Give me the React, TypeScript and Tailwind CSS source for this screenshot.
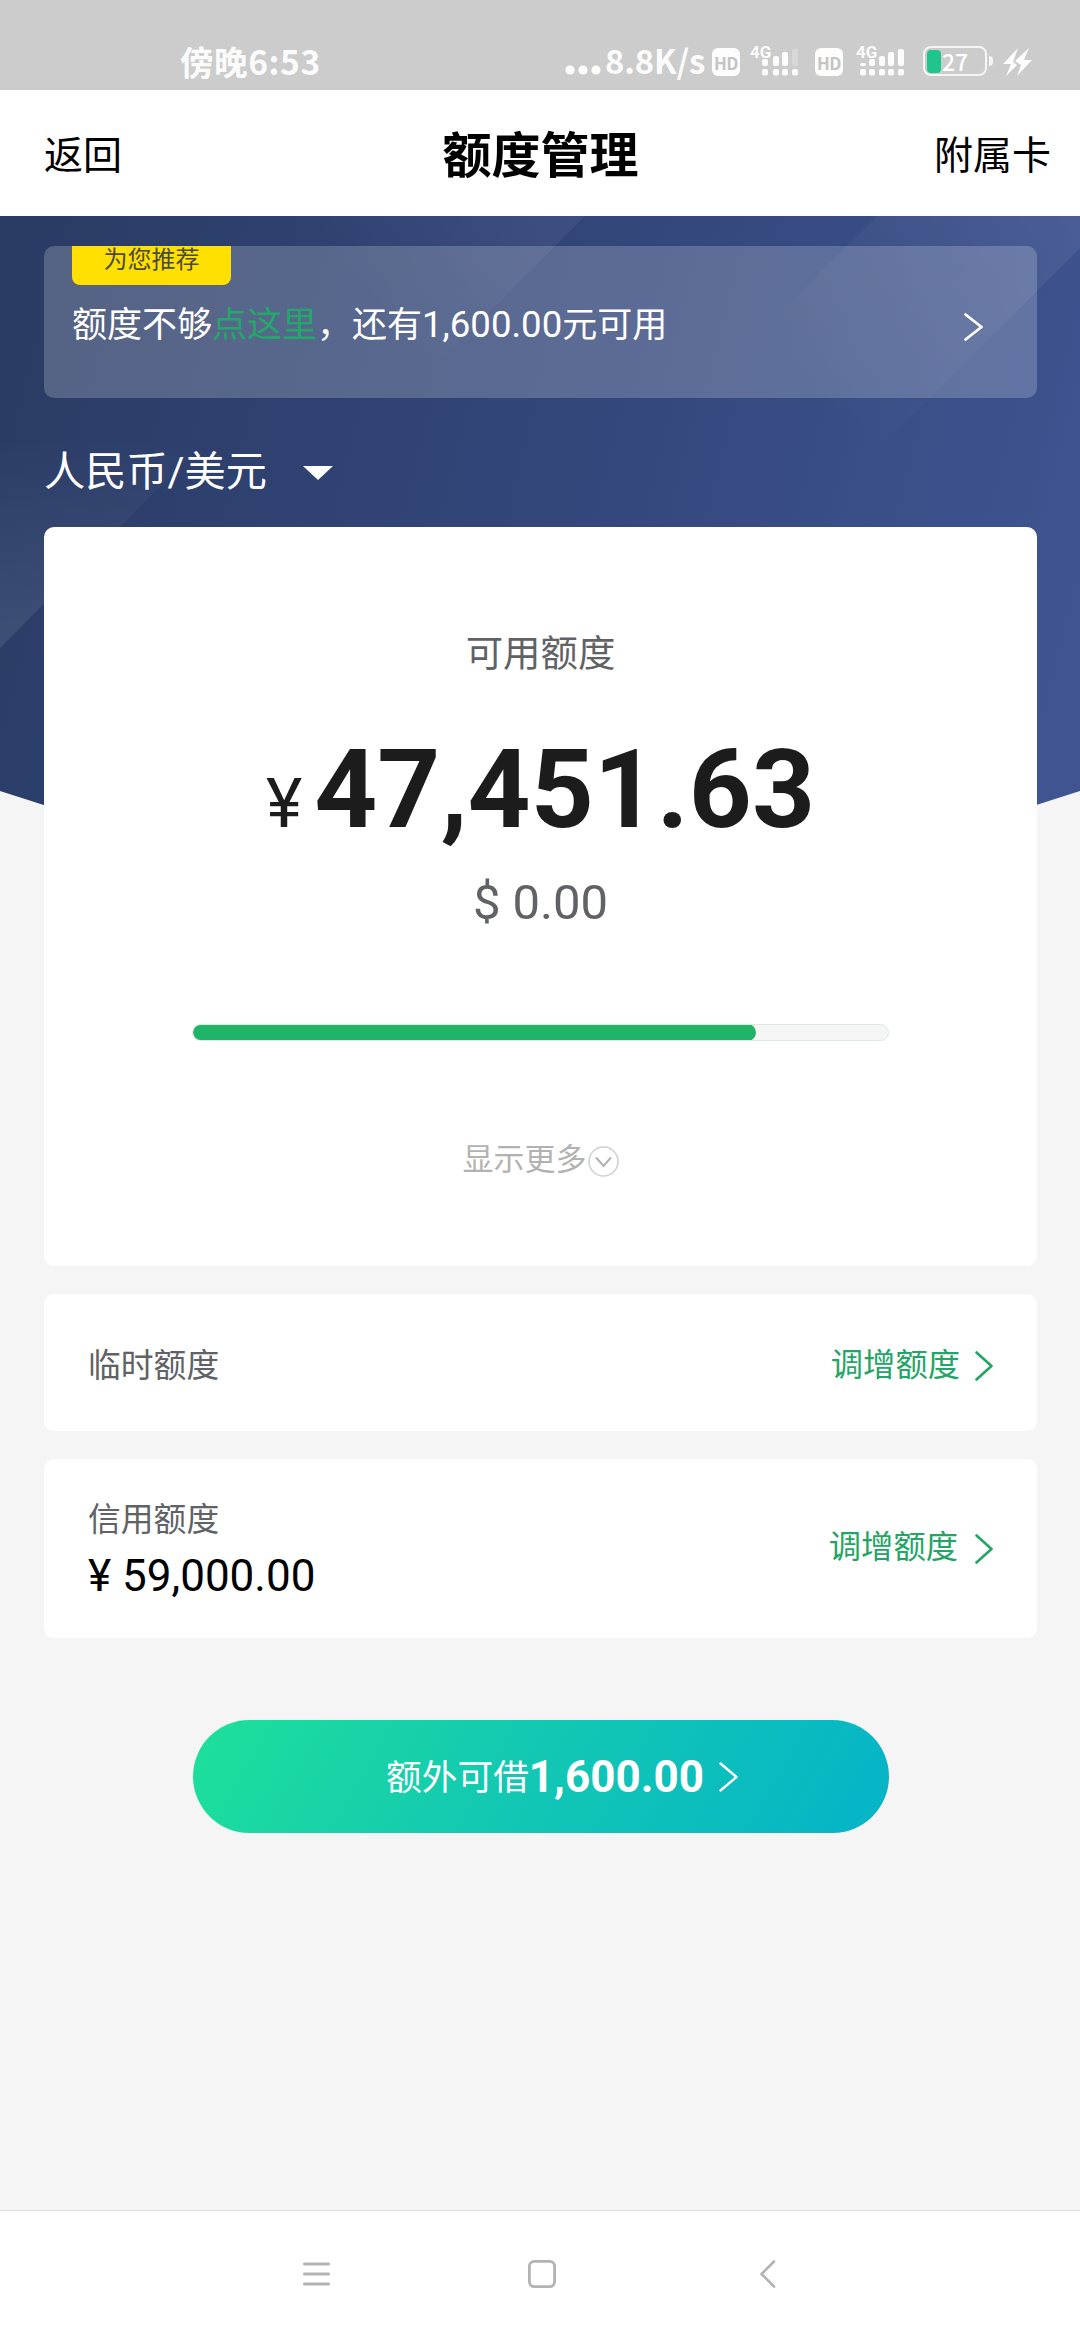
import React from "react"

type ChevronProps = {
  className?: string
  width: number
  height: number
  strokeWidth?: number
}

const Chevron = ({ className, width, height, strokeWidth = 2.6 }: ChevronProps) => (
  <svg
    className={className}
    width={width}
    height={height}
    viewBox={`0 0 ${width} ${height}`}
    fill="none"
    stroke="currentColor"
    strokeWidth={strokeWidth}
    strokeLinecap="round"
    strokeLinejoin="round"
  >
    <path d={`M1.5 1.5 L${width - 1.5} ${height / 2} L1.5 ${height - 1.5}`} />
  </svg>
)

const HdBadge = () => (
  <span className="flex h-7 w-7 items-center justify-center rounded-md bg-white/95 text-[17px] font-bold leading-none tracking-[-0.5px] text-[#c4c4c4]">
    HD
  </span>
)

type Bar = { x: number; top: number; faded?: boolean }

const Signal = ({ bars, width }: { bars: Bar[]; width: number }) => (
  <span className="relative block h-8" style={{ width }}>
    <span className="absolute left-0 top-0 font-['Roboto'] text-[17px] font-bold leading-[14px]">4G</span>
    <svg className="absolute left-0 top-0" width={width} height={32} fill="currentColor">
      {bars.map((bar) => (
        <g key={bar.x}>
          <rect x={bar.x} y={bar.top} width="6" height={21 - bar.top} rx="2" opacity={bar.faded ? 0.25 : 1} />
          <rect x={bar.x} y="24" width="6" height="6.5" rx="2" />
        </g>
      ))}
    </svg>
  </span>
)

const StatusBar = () => (
  <div className="flex h-[90px] items-start bg-[#cccccc] pl-[180px] pr-[48px] pt-[45px] font-['Noto_Sans_CJK_SC',sans-serif] text-white/95">
    <span className="-mt-[2px] text-[33.5px] font-bold leading-[36px] tracking-[0.6px]">傍晚6:53</span>
    <span className="ml-auto flex items-center">
      <svg width="37" height="10" className="mt-4" fill="currentColor">
        <circle cx="5" cy="5" r="4.6" />
        <circle cx="18" cy="5" r="4.6" />
        <circle cx="31" cy="5" r="4.6" />
      </svg>
      <span className="-mt-[3px] ml-[3px] w-[107px] text-[33px] font-bold leading-[36px] tracking-[-0.2px]">8.8K/s</span>
    </span>
    <span className="mt-[3px]">
      <HdBadge />
    </span>
    <span className="ml-[10px]">
      <Signal
        width={65}
        bars={[
          { x: 12, top: 14 },
          { x: 23, top: 11 },
          { x: 32, top: 7 },
          { x: 42, top: 4, faded: true },
        ]}
      />
    </span>
    <span className="mt-[3px]">
      <HdBadge />
    </span>
    <span className="ml-[13px]">
      <Signal
        width={67}
        bars={[
          { x: 4, top: 18 },
          { x: 13, top: 14 },
          { x: 23, top: 11 },
          { x: 32, top: 7 },
          { x: 42, top: 4 },
        ]}
      />
    </span>
    <span className="mt-[1px] flex items-center text-white/80">
      <span className="flex h-[30px] w-[64px] items-center rounded-[8px] border-2 border-current pl-[2px]">
        <span className="h-[23px] w-[14px] rounded-[4px] bg-[#20c48c]" />
        <span className="ml-[1px] text-[23px] font-medium leading-none text-white">27</span>
      </span>
      <span className="ml-[2px] h-[10px] w-[4px] rounded-r-full bg-current" />
    </span>
    <svg className="ml-[10px] mt-[3px]" width="29" height="29" viewBox="0 0 29 29" fill="currentColor">
      <path d="M15 0 L0 16 L8 16 L3 28 L14 17 L10 14 Z" />
      <path d="M26 0 L12 13 L18 17 L14 28 L29 12 L21 12 Z" />
    </svg>
  </div>
)

const Header = () => (
  <div className="grid h-[126px] grid-cols-3 items-center bg-white pl-[44px] pr-[29px] pt-[7px] text-[39px] text-black">
    <span>返回</span>
    <span className="pl-[9px] pt-[1px] text-center text-[49px] font-bold">
      <span className="-ml-[23px]">额度管理</span>
    </span>
    <span className="text-right">附属卡</span>
  </div>
)

// dark blue sheet with diagonal light bands and a pointed lower edge
const Backdrop = () => (
  <svg className="absolute left-0 top-0" width="1080" height="750" viewBox="0 0 1080 750">
    <defs>
      <linearGradient id="sheet" x1="0" y1="150" x2="1080" y2="420" gradientUnits="userSpaceOnUse">
        <stop offset="0" stopColor="#2a3c65" />
        <stop offset="0.5" stopColor="#33467a" />
        <stop offset="1" stopColor="#3f5491" />
      </linearGradient>
      <linearGradient id="bandLeft" x1="0" y1="430" x2="0" y2="220" gradientUnits="userSpaceOnUse">
        <stop offset="0" stopColor="#fff" stopOpacity="0.09" />
        <stop offset="1" stopColor="#fff" stopOpacity="0" />
      </linearGradient>
      <linearGradient id="bandMid" x1="530" y1="0" x2="400" y2="120" gradientUnits="userSpaceOnUse">
        <stop offset="0" stopColor="#fff" stopOpacity="0.05" />
        <stop offset="1" stopColor="#fff" stopOpacity="0" />
      </linearGradient>
      <linearGradient id="bandRight" x1="1080" y1="0" x2="850" y2="220" gradientUnits="userSpaceOnUse">
        <stop offset="0" stopColor="#fff" stopOpacity="0.07" />
        <stop offset="1" stopColor="#fff" stopOpacity="0" />
      </linearGradient>
    </defs>
    <path d="M0 0 H1080 V575 L540 748 L0 575 Z" fill="url(#sheet)" />
    <path d="M0 100 L330 100 L0 432 Z" fill="url(#bandLeft)" />
    <path d="M330 0 H585 L350 235 L150 280 Z" fill="url(#bandMid)" />
    <path d="M877 0 H1080 V32 L800 312 L600 277 Z" fill="url(#bandRight)" />
  </svg>
)

const Recommend = () => (
  <div className="relative h-[152px] overflow-hidden rounded-[10px] bg-white/20 pl-[28px]">
    <div className="h-[39px] w-[159px] rounded-b-[8px] bg-[#ffe000] text-center text-[24px] leading-[28px] text-[#4a4a3a]">
      为您推荐
    </div>
    <div className="mt-[17px] flex items-center justify-between pr-[54px] text-white">
      <p className="text-[35px] leading-[46px]">
        额度不够<span className="text-[#22a86a]">点这里</span>，还有<span className="text-[36.6px]">1,600.00</span>元可用
      </p>
      <Chevron width={19} height={28} className="mt-[3px]" strokeWidth={2.8} />
    </div>
  </div>
)

const LimitRow = ({ label, amount }: { label: string; amount?: string }) => (
  <div
    className={
      amount
        ? "mt-[28px] flex h-[179px] items-center justify-between rounded-[10px] bg-white px-[44px]"
        : "mt-[28px] flex h-[137px] items-center justify-between rounded-[10px] bg-white px-[44px] pt-[7px]"
    }
  >
    <div className="text-[32.8px] leading-[48px] text-[#606266]">
      <p className={amount && "pt-[2px]"}>{label}</p>
      {amount && <p className="mt-[5px] text-[44px] leading-[54px] text-black">{amount}</p>}
    </div>
    <div className="flex items-center text-[32.3px] leading-[48px] text-[#23a566]">
      <span className="pb-[3px]">调增额度</span>
      <Chevron width={18} height={30} className={amount ? "ml-[17px]" : "ml-[15px]"} />
    </div>
  </div>
)

const NavBar = () => (
  <div className="flex h-[130px] items-center justify-between border-t border-[#dcdcdc] bg-white pb-[3px] pl-[303px] pr-[304px] text-[#b3b3b3]">
    <svg width="27" height="24" fill="none" stroke="currentColor" strokeWidth="2.8" strokeLinecap="round">
      <path d="M1.4 2 H25.6 M1.4 12 H25.6 M1.4 22 H25.6" />
    </svg>
    <svg className="-ml-[6px]" width="28" height="28" fill="none" stroke="currentColor" strokeWidth="2.8">
      <rect x="1.4" y="1.4" width="25.2" height="25.2" rx="5" />
    </svg>
    <svg width="16" height="28" fill="none" stroke="currentColor" strokeWidth="2.6" strokeLinecap="round" strokeLinejoin="round">
      <path d="M14 1.5 L1.5 14 L14 26.5" />
    </svg>
  </div>
)

export default function App() {
  const usedPercent = 81

  return (
    <div className="flex h-[2340px] w-[1080px] flex-col overflow-hidden bg-[#f5f5f5] font-['Roboto','Noto_Sans_CJK_SC',sans-serif]">
      <StatusBar />
      <Header />
      <main className="relative flex-1">
        <Backdrop />
        <div className="relative pl-[44px] pr-[43px] pt-[30px]">
          <Recommend />

          <div className="flex h-[129px] items-center pt-[21px] text-[41.2px] leading-[50px] text-white">
            <span className="pb-[2px]">人民币/美元</span>
            <svg className="ml-[36px]" width="30" height="15" fill="currentColor">
              <path d="M0 0 H30 L15 14 Z" />
            </svg>
          </div>

          <section className="flex h-[739px] flex-col items-center rounded-[10px] bg-white pt-[100px]">
            <p className="text-[37.4px] leading-[54px] text-[#606266]">可用额度</p>
            <p className="mt-[44px] flex items-baseline leading-[130px] text-[#1c1c1c]">
              <span className="text-[69px]">¥</span>
              <span className="ml-[12px] text-[110px] font-bold">47,451.63</span>
            </p>
            <p className="mt-[4px] text-[49px] leading-[60px] text-[#606266]">$ 0.00</p>
            <div className="mt-[91px] h-[17px] w-[697px] overflow-hidden rounded-full border border-[#dde8e2] bg-[#f5f5f5]">
              <div className="-mt-px h-[17px] rounded-full bg-[#20b566]" style={{ width: `${usedPercent}%` }} />
            </div>
            <div className="mt-[95px] flex items-center text-[31px] leading-[48px] text-[#b2b2b2]">
              <span>显示更多</span>
              <svg className="ml-[1px] mt-[3px]" width="31" height="31" fill="none" stroke="currentColor">
                <circle cx="15.5" cy="15.5" r="14.5" stroke="#d0d3d2" strokeWidth="1.6" />
                <path d="M8.5 12 L15.5 20 L22.5 12" strokeWidth="2" strokeLinecap="round" />
              </svg>
            </div>
          </section>

          <LimitRow label="临时额度" />
          <LimitRow label="信用额度" amount="¥ 59,000.00" />

          <button className="mx-auto mt-[82px] flex h-[113px] w-[696px] items-center justify-center rounded-full bg-[linear-gradient(120deg,#1ee09a_0%,#13c9b2_45%,#05b3c8_100%)] pl-[43px] text-[35.7px] text-white">
            <span className="pt-[5px]">额外可借</span>
            <span className="text-[44px] font-bold">1,600.00</span>
            <Chevron width={19} height={30} className="ml-[15px]" strokeWidth={2.4} />
          </button>
        </div>
      </main>
      <NavBar />
    </div>
  )
}
